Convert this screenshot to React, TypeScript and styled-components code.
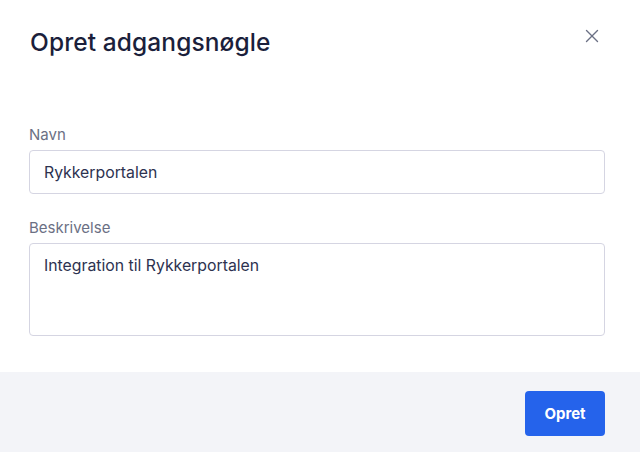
import styled, { createGlobalStyle } from "styled-components";
import { X } from "lucide-react";

const GlobalStyle = createGlobalStyle`
  html, body {
    margin: 0;
    padding: 0;
    background: #ffffff;
    font-family: Inter, "Noto Sans", sans-serif;
  }
`;

const Modal = styled.div`
  width: 640px;
  height: 452px;
  display: flex;
  flex-direction: column;
  background: #ffffff;
`;

const Header = styled.div`
  display: flex;
  justify-content: space-between;
  align-items: flex-start;
  padding: 27px 37px 0 30px;
  height: 100px;
  box-sizing: border-box;
`;

const Title = styled.h2`
  margin: 0;
  font-size: 24.5px;
  font-weight: 500;
  color: #1b1f3b;
  letter-spacing: 0.1px;
`;

const CloseButton = styled.button`
  border: none;
  background: transparent;
  padding: 0;
  margin: -2px 0 0 0;
  color: #6b7084;
  cursor: pointer;
  display: flex;
`;

const Body = styled.div`
  flex: 1;
  display: flex;
  flex-direction: column;
  gap: 25px;
  padding: 26px 35px 0 29px;
`;

const Field = styled.div`
  display: flex;
  flex-direction: column;
  gap: 6px;
`;

const Label = styled.label`
  font-size: 15px;
  color: #6b7084;
  line-height: 18px;
`;

const inputBase = `
  box-sizing: border-box;
  width: 100%;
  border: 1px solid #d5d5e2;
  border-radius: 4px;
  font-family: Inter, "Noto Sans", sans-serif;
  font-size: 15.8px;
  color: #2d3250;
  padding: 0 14px;
  outline: none;
  background: #ffffff;
`;

const Input = styled.input`
  ${inputBase}
  height: 44px;
`;

const TextArea = styled.textarea`
  ${inputBase}
  height: 93px;
  padding-top: 12px;
  resize: none;
  line-height: 20px;
`;

const Footer = styled.div`
  height: 80px;
  background: #f3f4f8;
  display: flex;
  justify-content: flex-end;
  align-items: center;
  padding: 0 35px;
`;

const PrimaryButton = styled.button`
  width: 80px;
  height: 45px;
  border: none;
  border-radius: 4px;
  background: #2563eb;
  color: #ffffff;
  font-family: Inter, "Noto Sans", sans-serif;
  font-size: 15px;
  font-weight: 700;
  cursor: pointer;
  margin-top: 2px;
`;

export default function App() {
  return (
    <>
      <GlobalStyle />
      <Modal>
        <Header>
          <Title>Opret adgangsnøgle</Title>
          <CloseButton aria-label="Luk">
            <X size={22} strokeWidth={1.5} />
          </CloseButton>
        </Header>
        <Body>
          <Field>
            <Label>Navn</Label>
            <Input defaultValue="Rykkerportalen" />
          </Field>
          <Field>
            <Label>Beskrivelse</Label>
            <TextArea defaultValue="Integration til Rykkerportalen" />
          </Field>
        </Body>
        <Footer>
          <PrimaryButton>Opret</PrimaryButton>
        </Footer>
      </Modal>
    </>
  );
}
